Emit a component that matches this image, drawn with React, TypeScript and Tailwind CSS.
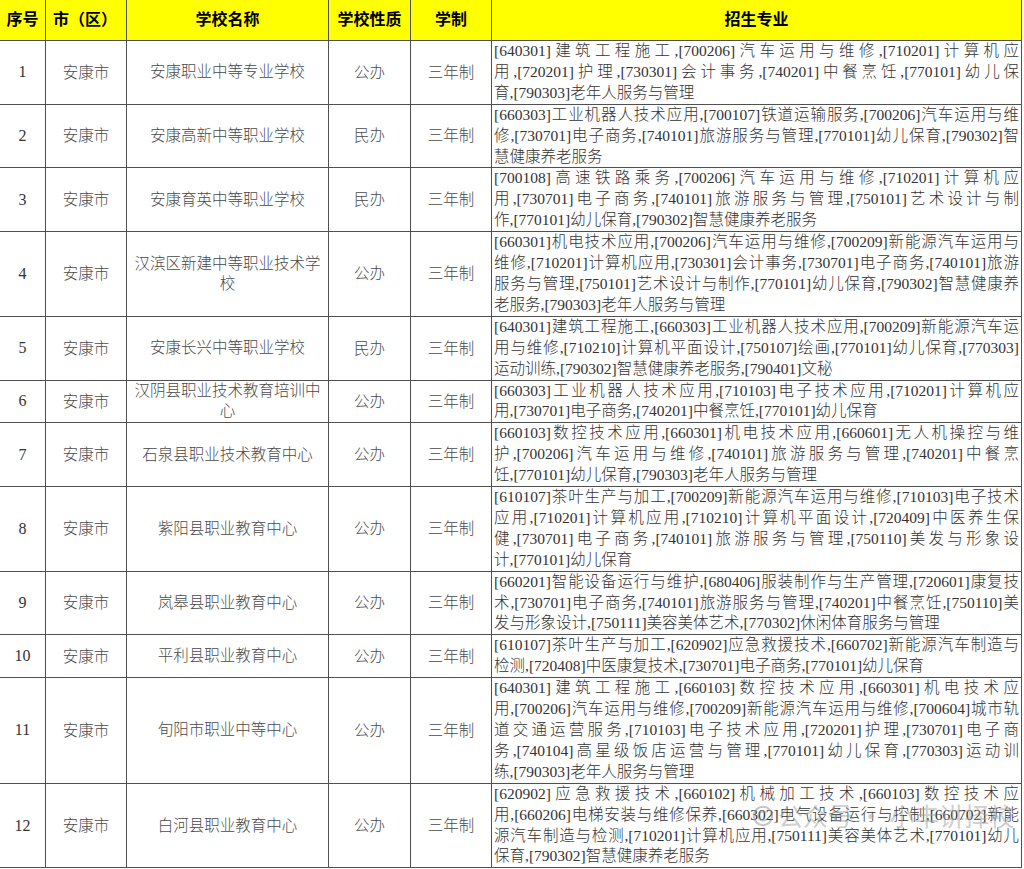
import React from "react";

type Row = {
  n: number;
  name: string[];
  type: string;
  majors: string[];
};

const rows: Row[] = [
  {
    n: 1,
    name: ["安康职业中等专业学校"],
    type: "公办",
    majors: [
      "[640301]建筑工程施工,[700206]汽车运用与维修,[710201]计算机应",
      "用,[720201]护理,[730301]会计事务,[740201]中餐烹饪,[770101]幼儿保",
      "育,[790303]老年人服务与管理",
    ],
  },
  {
    n: 2,
    name: ["安康高新中等职业学校"],
    type: "民办",
    majors: [
      "[660303]工业机器人技术应用,[700107]铁道运输服务,[700206]汽车运用与维",
      "修,[730701]电子商务,[740101]旅游服务与管理,[770101]幼儿保育,[790302]智",
      "慧健康养老服务",
    ],
  },
  {
    n: 3,
    name: ["安康育英中等职业学校"],
    type: "民办",
    majors: [
      "[700108]高速铁路乘务,[700206]汽车运用与维修,[710201]计算机应",
      "用,[730701]电子商务,[740101]旅游服务与管理,[750101]艺术设计与制",
      "作,[770101]幼儿保育,[790302]智慧健康养老服务",
    ],
  },
  {
    n: 4,
    name: ["汉滨区新建中等职业技术学", "校"],
    type: "公办",
    majors: [
      "[660301]机电技术应用,[700206]汽车运用与维修,[700209]新能源汽车运用与",
      "维修,[710201]计算机应用,[730301]会计事务,[730701]电子商务,[740101]旅游",
      "服务与管理,[750101]艺术设计与制作,[770101]幼儿保育,[790302]智慧健康养",
      "老服务,[790303]老年人服务与管理",
    ],
  },
  {
    n: 5,
    name: ["安康长兴中等职业学校"],
    type: "民办",
    majors: [
      "[640301]建筑工程施工,[660303]工业机器人技术应用,[700209]新能源汽车运",
      "用与维修,[710210]计算机平面设计,[750107]绘画,[770101]幼儿保育,[770303]",
      "运动训练,[790302]智慧健康养老服务,[790401]文秘",
    ],
  },
  {
    n: 6,
    name: ["汉阴县职业技术教育培训中", "心"],
    type: "公办",
    majors: [
      "[660303]工业机器人技术应用,[710103]电子技术应用,[710201]计算机应",
      "用,[730701]电子商务,[740201]中餐烹饪,[770101]幼儿保育",
    ],
  },
  {
    n: 7,
    name: ["石泉县职业技术教育中心"],
    type: "公办",
    majors: [
      "[660103]数控技术应用,[660301]机电技术应用,[660601]无人机操控与维",
      "护,[700206]汽车运用与维修,[740101]旅游服务与管理,[740201]中餐烹",
      "饪,[770101]幼儿保育,[790303]老年人服务与管理",
    ],
  },
  {
    n: 8,
    name: ["紫阳县职业教育中心"],
    type: "公办",
    majors: [
      "[610107]茶叶生产与加工,[700209]新能源汽车运用与维修,[710103]电子技术",
      "应用,[710201]计算机应用,[710210]计算机平面设计,[720409]中医养生保",
      "健,[730701]电子商务,[740101]旅游服务与管理,[750110]美发与形象设",
      "计,[770101]幼儿保育",
    ],
  },
  {
    n: 9,
    name: ["岚皋县职业教育中心"],
    type: "公办",
    majors: [
      "[660201]智能设备运行与维护,[680406]服装制作与生产管理,[720601]康复技",
      "术,[730701]电子商务,[740101]旅游服务与管理,[740201]中餐烹饪,[750110]美",
      "发与形象设计,[750111]美容美体艺术,[770302]休闲体育服务与管理",
    ],
  },
  {
    n: 10,
    name: ["平利县职业教育中心"],
    type: "公办",
    majors: [
      "[610107]茶叶生产与加工,[620902]应急救援技术,[660702]新能源汽车制造与",
      "检测,[720408]中医康复技术,[730701]电子商务,[770101]幼儿保育",
    ],
  },
  {
    n: 11,
    name: ["旬阳市职业中等中心"],
    type: "公办",
    majors: [
      "[640301]建筑工程施工,[660103]数控技术应用,[660301]机电技术应",
      "用,[700206]汽车运用与维修,[700209]新能源汽车运用与维修,[700604]城市轨",
      "道交通运营服务,[710103]电子技术应用,[720201]护理,[730701]电子商",
      "务,[740104]高星级饭店运营与管理,[770101]幼儿保育,[770303]运动训",
      "练,[790303]老年人服务与管理",
    ],
  },
  {
    n: 12,
    name: ["白河县职业教育中心"],
    type: "公办",
    majors: [
      "[620902]应急救援技术,[660102]机械加工技术,[660103]数控技术应",
      "用,[660206]电梯安装与维修保养,[660302]电气设备运行与控制,[660702]新能",
      "源汽车制造与检测,[710201]计算机应用,[750111]美容美体艺术,[770101]幼儿",
      "保育,[790302]智慧健康养老服务",
    ],
  },
];

const font = "font-['Liberation_Serif','Noto_Sans_CJK_SC',serif]";
const cell = "border-r border-b border-[#505050] flex items-center justify-center text-center";

export default function App() {
  return (
    <div className={`relative w-[1024px] h-[869px] overflow-hidden bg-white ${font}`}>
      <div className="grid grid-cols-[46px_81px_202px_82px_81px_530px] w-[1022px]">
        {["序号", "市（区）", "学校名称", "学校性质", "学制", "招生专业"].map((h, i) => (
          <div
            key={h}
            className={`${cell} h-[41px] bg-[#ffff00] text-[16px] font-bold text-black ${
              i === 1 ? "justify-start pl-[7px]" : ""
            }`}
          >
            {h}
          </div>
        ))}
        {rows.map((r) => (
          <React.Fragment key={r.n}>
            <div className={`${cell} text-[16px] text-[#333]`}>{r.n}</div>
            <div className={`${cell} text-[15.5px] text-[#4a4a4a] font-light`}>安康市</div>
            <div className={`${cell} flex-col text-[15.5px] leading-[20px] text-[#4a4a4a] font-light`}>
              {r.name.map((l) => (
                <div key={l}>{l}</div>
              ))}
            </div>
            <div className={`${cell} text-[15.5px] text-[#4a4a4a] font-light`}>{r.type}</div>
            <div className={`${cell} text-[15.5px] text-[#4a4a4a] font-light`}>三年制</div>
            <div className="border-r border-b border-[#505050] pl-[2px] pr-[2px] text-[15.5px] leading-[20.9px] text-[#333] font-light">
              {r.majors.map((l, i) => (
                <div
                  key={i}
                  className={
                    i < r.majors.length - 1
                      ? "text-justify [text-align-last:justify]"
                      : "text-left"
                  }
                >
                  {l}
                </div>
              ))}
            </div>
          </React.Fragment>
        ))}
      </div>
      <div className="absolute left-[752px] top-[803px] flex items-center gap-[4px] whitespace-nowrap text-[25px] leading-none text-[#a0a0a0] opacity-50 pointer-events-none font-['Noto_Sans_CJK_SC',sans-serif]">
        <svg width="22" height="22" viewBox="0 0 24 24" fill="none" stroke="#8a8a8a" strokeWidth="2.2">
          <circle cx="12" cy="12" r="10" />
          <path d="M15.5 8.5a5 5 0 1 0 0 7" />
        </svg>
        <span>公众号 · 小丰讲择校</span>
      </div>
    </div>
  );
}
